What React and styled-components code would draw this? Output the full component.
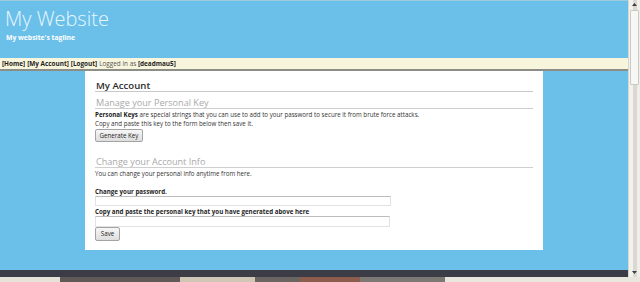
import styled, { createGlobalStyle } from "styled-components";

const GlobalStyle = createGlobalStyle`
  html, body {
    margin: 0;
    padding: 0;
    width: 640px;
    height: 282px;
    overflow: hidden;
    background: #6bc0ea;
  }
  * {
    box-sizing: border-box;
  }
  body {
    font-family: "Open Sans", "DejaVu Sans", sans-serif;
  }
`;

const Screen = styled.div`
  width: 640px;
  height: 282px;
  display: flex;
  flex-direction: column;
`;

const Window = styled.div`
  flex: 1;
  display: flex;
  min-height: 0;
`;

const Viewport = styled.div`
  flex: 1;
  display: flex;
  flex-direction: column;
  background: #6bc0ea;
`;

const Header = styled.header`
  height: 58px;
  padding: 5px 0 0 5px;
  border-top: 1px solid #9fc9dc;
`;

const SiteTitle = styled.h1`
  margin: 0;
  font-size: 20px;
  line-height: 26px;
  font-weight: 300;
  color: #e6f7fd;
`;

const Tagline = styled.div`
  margin: 1px 0 0 1px;
  font-size: 6.8px;
  line-height: 9px;
  font-weight: 700;
  color: #ffffff;
`;

const NavBar = styled.nav`
  height: 13px;
  padding: 0 2px;
  background: #f8f5dd;
  border-bottom: 2px solid #8d8d88;
  display: flex;
  align-items: center;
  gap: 2px;
  font-size: 6.4px;
  color: #555;
`;

const NavLink = styled.a`
  font-weight: 700;
  color: #1e1e1e;
  text-decoration: none;
`;

const Content = styled.main`
  flex: 1;
  padding-left: 85px;
`;

const Card = styled.section`
  width: 458px;
  height: 179px;
  background: #ffffff;
  padding: 9px 10px 9px 10px;
  display: flex;
  flex-direction: column;
  align-items: flex-start;
`;

const PageTitle = styled.h2`
  align-self: stretch;
  margin: 0;
  padding-left: 1px;
  font-size: 9.6px;
  line-height: 11px;
  font-weight: 600;
  color: #2a2a2a;
  border-bottom: 1px solid #c8c8c8;
`;

const SectionTitle = styled.h3`
  align-self: stretch;
  margin: ${(p) => p.$top}px 0 0;
  padding-left: 1px;
  font-size: 9.1px;
  line-height: 11px;
  font-weight: 400;
  color: #a9a9a9;
  border-bottom: 1px solid #cfcfcf;
`;

const Text = styled.p`
  margin: ${(p) => p.$top || 0}px 0 0;
  font-size: 6.2px;
  line-height: 9px;
  color: #333;
  b {
    font-weight: 700;
    color: #1a1a1a;
  }
`;

const Label = styled.label`
  display: block;
  margin-top: ${(p) => p.$top}px;
  font-size: 6.2px;
  line-height: 9px;
  font-weight: 700;
  color: #1e1e1e;
`;

const Input = styled.input`
  display: block;
  width: ${(p) => p.$w}px;
  height: ${(p) => p.$h}px;
  margin: 0;
  padding: 0;
  border: 1px solid #e2e2e2;
  border-top-color: #bdbdbd;
  background: #fff;
`;

const Button = styled.button`
  height: ${(p) => p.$h}px;
  width: ${(p) => p.$w}px;
  margin-top: ${(p) => p.$top || 0}px;
  padding: 0;
  font-family: "Open Sans", "DejaVu Sans", sans-serif;
  font-size: 6.2px;
  color: #1e1e1e;
  background: linear-gradient(#f6f6f6, #dedede);
  border: 1px solid #a3a3a3;
  border-radius: 2px;
`;

const StatusBar = styled.div`
  height: 7px;
  background: #3b3c45;
`;

const Scrollbar = styled.div`
  width: 12px;
  display: flex;
  flex-direction: column;
  background: linear-gradient(90deg, #f2f1ec 0 4px, #d9d8d3 4px 8px, #efeee9 8px);
  border-left: 1px solid #d8d6cf;
`;

const ScrollArrow = styled.div`
  height: 9px;
  display: flex;
  align-items: center;
  justify-content: center;
  svg {
    display: block;
  }
`;

const ScrollThumb = styled.div`
  height: 75px;
  margin: 1px 1px 0;
  background: #f7f7f5;
  border: 1px solid #c9c8c2;
  border-radius: 1px;
`;

const ScrollTrack = styled.div`
  flex: 1;
`;

const Taskbar = styled.div`
  height: 5px;
  background: linear-gradient(
    90deg,
    #e6e2d8 0 60px,
    #5f5a57 60px 180px,
    #cfc6b6 180px 255px,
    #6a6561 255px 300px,
    #8c5c4c 300px 360px,
    #7c7874 360px 445px,
    #e9e6de 445px
  );
`;

function Arrow({ down }) {
  return (
    <svg width="5" height="3" viewBox="0 0 5 3">
      <path d={down ? "M0 0h5L2.5 3z" : "M0 3h5L2.5 0z"} fill="#3c3c3c" />
    </svg>
  );
}

export default function App() {
  return (
    <Screen>
      <GlobalStyle />
      <Window>
        <Viewport>
          <Header>
            <SiteTitle>My Website</SiteTitle>
            <Tagline>My website's tagline</Tagline>
          </Header>
          <NavBar>
            <NavLink href="#">[Home]</NavLink>
            <NavLink href="#">[My Account]</NavLink>
            <NavLink href="#">[Logout]</NavLink>
            <span>
              Logged in as <NavLink as="b">[deadmau5]</NavLink>
            </span>
          </NavBar>
          <Content>
            <Card>
              <PageTitle>My Account</PageTitle>
              <SectionTitle $top={5}>Manage your Personal Key</SectionTitle>
              <Text $top={1}>
                <b>Personal Keys</b> are special strings that you can use to add to your
                password to secure it from brute force attacks.
              </Text>
              <Text>Copy and paste this key to the form below then save it.</Text>
              <Button $w={48} $h={14} $top={1}>
                Generate Key
              </Button>
              <SectionTitle $top={14}>Change your Account Info</SectionTitle>
              <Text $top={1}>You can change your personal info anytime from here.</Text>
              <Label $top={9}>Change your password.</Label>
              <Input type="password" $w={296} $h={10} />
              <Label $top={1}>Copy and paste the personal key that you have generated above here</Label>
              <Input type="text" $w={295} $h={11} />
              <Button $w={25} $h={16}>
                Save
              </Button>
            </Card>
          </Content>
          <StatusBar />
        </Viewport>
        <Scrollbar>
          <ScrollArrow>
            <Arrow />
          </ScrollArrow>
          <ScrollThumb />
          <ScrollTrack />
          <ScrollArrow>
            <Arrow down />
          </ScrollArrow>
        </Scrollbar>
      </Window>
      <Taskbar />
    </Screen>
  );
}
